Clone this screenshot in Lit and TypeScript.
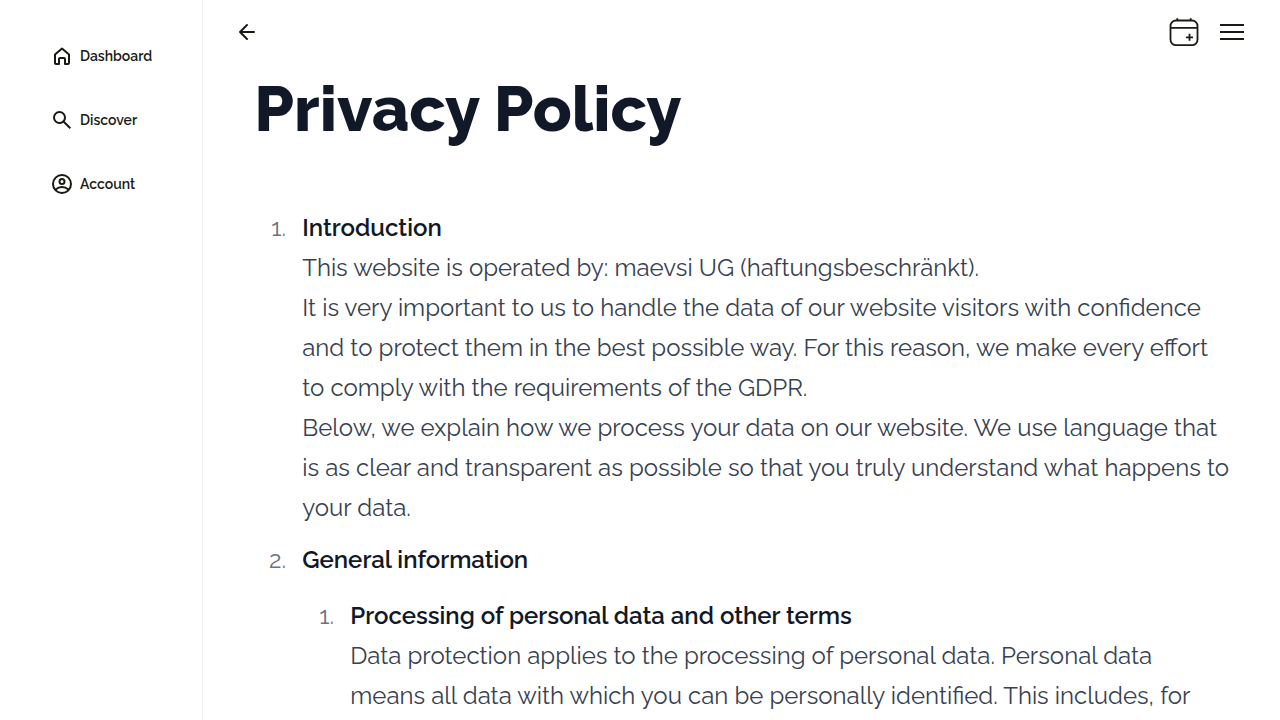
import { LitElement, html, css, svg } from "lit";
import { customElement } from "lit/decorators.js";

const ICONS = {
  home: svg`<path d="M5 10.500 12 4.500l7 6V19a1 1 0 0 1-1 1h-3v-5a1 1 0 0 0-1-1h-4a1 1 0 0 0-1 1v5H6a1 1 0 0 1-1-1Z" fill="none" stroke="currentColor" stroke-width="2" stroke-linejoin="round"/>`,
  search: svg`<path d="m19.600 21-6.300-6.300A6.100 6.100 0 0 1 9.500 16 6.500 6.500 0 1 1 16 9.500a6.100 6.100 0 0 1-1.300 3.800l6.300 6.300-1.400 1.400ZM9.500 14A4.500 4.500 0 1 0 5 9.500 4.500 4.500 0 0 0 9.500 14Z" fill="currentColor"/>`,
  account: svg`<g fill="none" stroke="currentColor" stroke-width="2"><circle cx="12" cy="12" r="9"/><circle cx="12" cy="9.500" r="2.500"/><path d="M5.500 17.500C7.300 16 9.500 15 12 15s4.700 1 6.500 2.500"/></g>`,
  back: svg`<path d="M19 12H5M12 19l-7-7 7-7" fill="none" stroke="currentColor" stroke-width="2" stroke-linecap="round" stroke-linejoin="round"/>`,
};

const NAV: { icon: keyof typeof ICONS; label: string }[] = [
  { icon: "home", label: "Dashboard" },
  { icon: "search", label: "Discover" },
  { icon: "account", label: "Account" },
];

@customElement("app-root")
export class AppRoot extends LitElement {
  static styles = css`
    :host {
      display: flex;
      min-height: 100vh;
      background: #fff;
      color: #1a1a14;
      font-family: Raleway, "Open Sans", sans-serif;
      text-rendering: optimizeLegibility;
    }
    * { box-sizing: border-box; }
    .sidebar {
      flex: none;
      border-right: 1px solid #f0f0f0;
      padding: 24px 50px;
    }
    .nav { display: flex; flex-direction: column; }
    .nav-link {
      display: flex;
      align-items: center;
      gap: 6px;
      height: 64px;
      color: inherit;
      text-decoration: none;
      font-size: 14px;
      line-height: 20px;
      font-weight: 600;
    }
    .icon { display: block; width: 24px; height: 24px; flex: none; }
    .page { flex: 1; min-width: 0; }
    .topbar {
      display: flex;
      align-items: center;
      justify-content: space-between;
      height: 64px;
      padding: 0 32px;
    }
    .actions { display: flex; gap: 16px; }
    .button {
      display: flex;
      align-items: center;
      justify-content: center;
      border: 0;
      padding: 0;
      background: none;
      color: inherit;
      cursor: pointer;
    }
    .large { width: 32px; height: 32px; }
    .article {
      padding: 0 48px 0 51px;
      color: #374151;
      font-size: 24px;
      line-height: 40px;
    }
    .title {
      margin: 12px 0 66px;
      color: #111827;
      font-size: 64px;
      line-height: 66px;
      font-weight: 800;
    }
    .list { margin: 0; padding-left: 38px; }
    .item { padding-left: 10px; }
    .item + .item { margin-top: 12px; }
    .item::marker { color: #6b7280; }
    .sublist { margin-top: 16px; }
    strong { color: #111827; font-weight: 600; }
  `;

  private icon(name: keyof typeof ICONS) {
    return html`<svg class="icon" viewBox="0 0 24 24" aria-hidden="true">${ICONS[name]}</svg>`;
  }

  render() {
    return html`
      <aside class="sidebar">
        <nav class="nav">
          ${NAV.map((n) => html`<a class="nav-link" href="#">${this.icon(n.icon)}${n.label}</a>`)}
        </nav>
      </aside>
      <div class="page">
        <header class="topbar">
          <button class="button" type="button" aria-label="Back">${this.icon("back")}</button>
          <div class="actions">
            <button class="button" type="button" aria-label="New event">
              <svg class="icon large" viewBox="0 0 32 32" fill="none" stroke="currentColor" stroke-width="1.800" aria-hidden="true">
                <rect x="2.500" y="4.500" width="27" height="24.700" rx="5.500"/>
                <path d="M3 11.800h26M9.300 2.300v2M22.700 2.300v2M18 21.300h7M21.500 17.800v7"/>
              </svg>
            </button>
            <button class="button" type="button" aria-label="Menu">
              <svg class="icon large" viewBox="0 0 32 32" aria-hidden="true">
                <path d="M4 8h24v2H4zM4 15h24v2H4zM4 22h24v2H4z" fill="currentColor"/>
              </svg>
            </button>
          </div>
        </header>
        <main class="article">
          <h1 class="title">Privacy Policy</h1>
          <ol class="list">
            <li class="item">
              <strong>Introduction</strong><br />
              This website is operated by: maevsi UG (haftungsbeschränkt).<br />
              It is very important to us to handle the data of our website visitors with confidence and to protect them in the best possible way. For this reason, we make every effort to comply with the requirements of the GDPR.<br />
              Below, we explain how we process your data on our website. We use language that is as clear and transparent as possible so that you truly understand what happens to your data.
            </li>
            <li class="item">
              <strong>General information</strong>
              <ol class="list sublist">
                <li class="item">
                  <strong>Processing of personal data and other terms</strong><br />
                  Data protection applies to the processing of personal data. Personal data means all data with which you can be personally identified. This includes, for
                </li>
              </ol>
            </li>
          </ol>
        </main>
      </div>
    `;
  }
}
